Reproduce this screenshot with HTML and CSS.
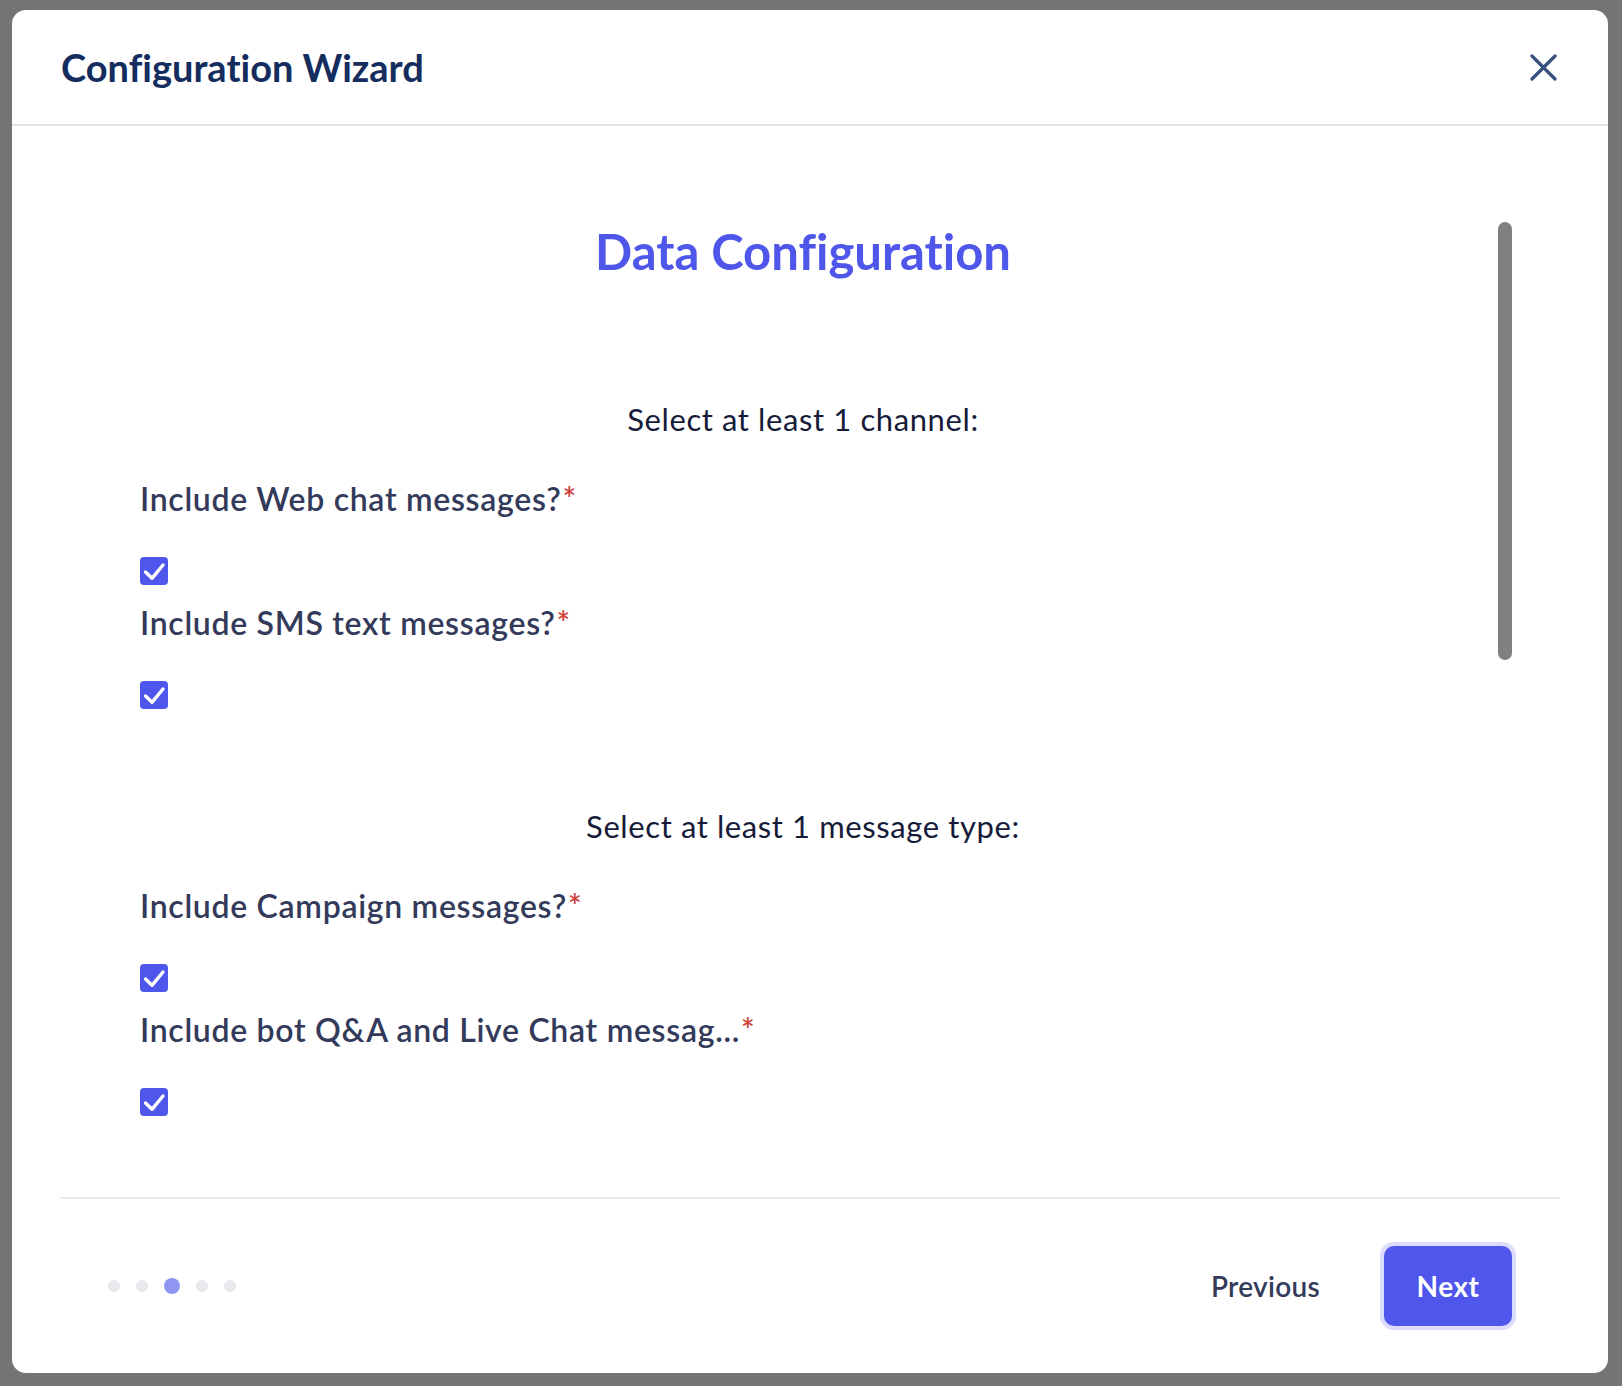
FILE: index.html
```html
<!DOCTYPE html>
<html lang="en">
<head>
<meta charset="utf-8">
<title>Configuration Wizard</title>
<link rel="stylesheet" href="styles.css">
</head>
<body>
<div class="backdrop">
  <div class="modal">
    <header class="modal-header">
      <h1 class="modal-title">Configuration Wizard</h1>
      <button class="close-btn" aria-label="Close">
        <svg width="27" height="27" viewBox="0 0 27 27"><path d="M2 2 L25 25 M25 2 L2 25" stroke="#36507f" stroke-width="3.2" stroke-linecap="round" fill="none"/></svg>
      </button>
    </header>
    <main class="modal-body">
      <div class="content">
        <h2 class="step-title">Data Configuration</h2>
        <section class="group">
          <p class="group-hint">Select at least 1 channel:</p>
          <div class="field">
            <label class="field-label">Include Web chat messages?<span class="req">*</span></label>
            <span class="checkbox"><svg width="28" height="28" viewBox="0 0 28 28"><path d="M5.5 15 L12 21.3 L23 8" stroke="#fff" stroke-width="3.4" stroke-linecap="round" stroke-linejoin="round" fill="none"/></svg></span>
          </div>
          <div class="field">
            <label class="field-label">Include SMS text messages?<span class="req">*</span></label>
            <span class="checkbox"><svg width="28" height="28" viewBox="0 0 28 28"><path d="M5.5 15 L12 21.3 L23 8" stroke="#fff" stroke-width="3.4" stroke-linecap="round" stroke-linejoin="round" fill="none"/></svg></span>
          </div>
        </section>
        <section class="group">
          <p class="group-hint">Select at least 1 message type:</p>
          <div class="field">
            <label class="field-label">Include Campaign messages?<span class="req">*</span></label>
            <span class="checkbox"><svg width="28" height="28" viewBox="0 0 28 28"><path d="M5.5 15 L12 21.3 L23 8" stroke="#fff" stroke-width="3.4" stroke-linecap="round" stroke-linejoin="round" fill="none"/></svg></span>
          </div>
          <div class="field">
            <label class="field-label">Include bot Q&amp;A and Live Chat messag...<span class="req">*</span></label>
            <span class="checkbox"><svg width="28" height="28" viewBox="0 0 28 28"><path d="M5.5 15 L12 21.3 L23 8" stroke="#fff" stroke-width="3.4" stroke-linecap="round" stroke-linejoin="round" fill="none"/></svg></span>
          </div>
        </section>
      </div>
      <div class="scroll-track"><div class="scroll-thumb"></div></div>
    </main>
    <footer class="modal-footer">
      <div class="steps">
        <span class="dot"></span>
        <span class="dot"></span>
        <span class="dot active"></span>
        <span class="dot"></span>
        <span class="dot"></span>
      </div>
      <div class="actions">
        <button class="btn-prev">Previous</button>
        <button class="btn-next">Next</button>
      </div>
    </footer>
  </div>
</div>
</body>
</html>
```

FILE: styles.css
```css
* { box-sizing: border-box; }
html, body { margin: 0; padding: 0; }
body {
  background: #747474;
  width: 1622px;
  height: 1386px;
  overflow: hidden;
  font-family: Lato, "Noto Sans", sans-serif;
  font-variant-ligatures: no-common-ligatures;
}
.backdrop {
  padding: 10px 14px 13px 12px;
  height: 1386px;
}
.modal {
  width: 1596px;
  height: 1363px;
  background: #fff;
  border-radius: 14px;
  display: flex;
  flex-direction: column;
  overflow: hidden;
}
.modal-header {
  height: 116px;
  flex: none;
  border-bottom: 2px solid #e2e2e2;
  display: flex;
  align-items: center;
  justify-content: space-between;
  padding: 0 51px 0 49px;
}
.modal-title {
  margin: 0;
  font-family: Lato, "Open Sans", sans-serif;
  font-weight: 700;
  font-size: 38px;
  line-height: 44px;
  color: #142d5e;
}
.close-btn {
  border: 0;
  background: none;
  padding: 0;
  width: 27px;
  height: 27px;
  display: flex;
}
.modal-body {
  flex: 1;
  display: flex;
  overflow: hidden;
  padding-left: 128px;
}
.content {
  width: 1326px;
  padding-top: 95px;
}
.step-title {
  margin: 0;
  text-align: center;
  font-size: 49px;
  line-height: 60px;
  font-weight: 700;
  color: #4f57ea;
}
.group { display: flex; flex-direction: column; }
.group:first-of-type { margin-top: 118px; }
.group + .group { margin-top: 97px; }
.group-hint {
  margin: 0 0 40px;
  text-align: center;
  font-size: 31px;
  letter-spacing: 0.6px;
  line-height: 40px;
  color: #161b3a;
}
.field { display: flex; flex-direction: column; align-items: flex-start; }
.field + .field { margin-top: 18px; }
.field-label {
  font-size: 32px;
  letter-spacing: 0.7px;
  line-height: 40px;
  font-weight: 600;
  color: #333a5a;
}
.req { color: #d0423a; margin-left: 1px; }
.checkbox {
  margin-top: 38px;
  width: 28px;
  height: 28px;
  border-radius: 4px;
  background: #4f56ec;
  display: flex;
}
.scroll-track {
  margin-left: 32px;
  padding-top: 96px;
}
.scroll-thumb {
  width: 14px;
  height: 438px;
  border-radius: 7px;
  background: #808080;
}
.modal-footer {
  flex: none;
  height: 176px;
  margin: 0 48px;
  border-top: 2px solid #e9e9f0;
  display: flex;
  align-items: center;
  justify-content: space-between;
  padding: 0 44px 0 48px;
}
.steps { display: flex; align-items: center; gap: 16px; }
.dot {
  width: 12px;
  height: 12px;
  border-radius: 50%;
  background: #e8e9ee;
}
.dot.active {
  width: 16px;
  height: 16px;
  background: #8f95f1;
}
.actions { display: flex; align-items: center; }
.btn-prev {
  border: 0;
  background: none;
  font-family: Lato, "Noto Sans", sans-serif;
  font-size: 28px;
  letter-spacing: 0.3px;
  font-weight: 600;
  color: #333a5a;
  padding: 0 28px;
  margin-right: 36px;
}
.btn-next {
  width: 128px;
  height: 80px;
  border: 0;
  border-radius: 10px;
  background: #4f56ec;
  box-shadow: 0 0 0 4px #dcdcfc;
  color: #fff;
  font-family: Lato, "Noto Sans", sans-serif;
  font-size: 28px;
  letter-spacing: 0.5px;
  font-weight: 700;
  margin-right: 4px;
}
```
